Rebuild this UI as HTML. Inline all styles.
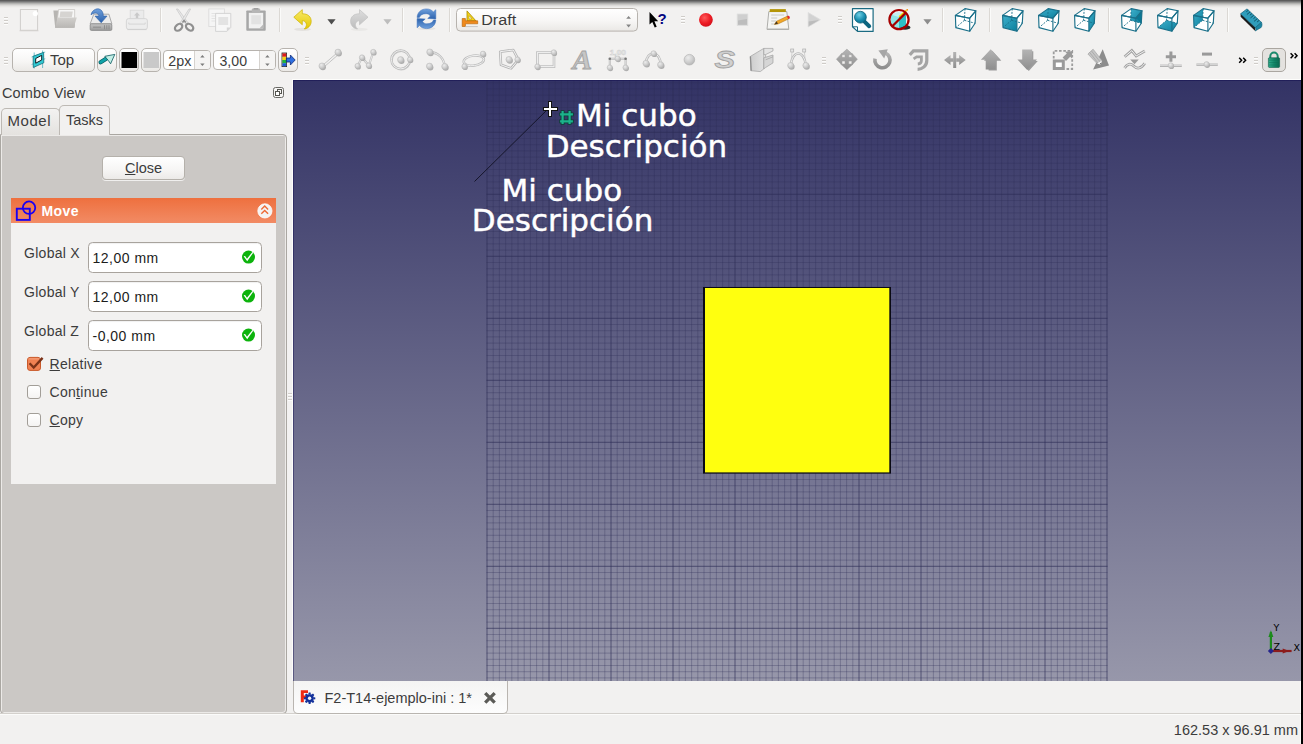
<!DOCTYPE html>
<html lang="en">
<head>
<meta charset="utf-8">
<title>FreeCAD</title>
<style>
html,body{margin:0;padding:0;}
body{width:1303px;height:744px;overflow:hidden;background:#f2f1f0;position:relative;
  font-family:"Liberation Sans","DejaVu Sans",sans-serif;font-size:14.5px;color:#3c3c3c;}
.abs{position:absolute;}
#topshadow{left:0;top:0;width:1301px;height:9px;background:linear-gradient(#5c5c5c 0.5px,#767676 1.5px,#949493 2.5px,#b2b2b0 3.5px,#cac9c7 4.5px,#dcdbd9 5.5px,#e8e7e5 6.5px,#efeeec 7.5px,#f2f1f0 8.5px);}
#rightedge{left:1301px;top:0;width:2px;height:744px;background:#000;}
.handle{position:absolute;width:6px;height:9px;
  background:repeating-linear-gradient(#c9c6c2 0,#c9c6c2 1px,transparent 1px,transparent 3px);}
.vsep{position:absolute;width:1px;height:26px;background:#d6d3cf;box-shadow:1px 0 0 #fbfbfa;}
.btn{position:absolute;box-sizing:border-box;border:1px solid #b5b1ab;border-radius:4px;
  background:linear-gradient(#ffffff,#f6f5f4 60%,#eceae8);box-shadow:0 1px 0 rgba(255,255,255,.7);}
.u{text-decoration:underline;}
/* view */
#view{left:293px;top:80px;width:1008px;height:601px;background:linear-gradient(#333365,#9797aa);overflow:hidden;box-shadow:-1px -1px 0 #fdfdfb;}
#view:after{content:'';position:absolute;left:0;top:0;width:1008px;height:601px;box-sizing:border-box;border-top:1px solid rgba(20,16,80,.55);border-left:1px solid rgba(20,16,80,.45);}
#view svg{position:absolute;left:0;top:0;}
.vt{font-family:"DejaVu Sans",sans-serif;font-size:31px;fill:#fff;text-anchor:middle;stroke:#fff;stroke-width:.45px;}
/* combo */
#combo-title{left:2px;top:84.5px;letter-spacing:.15px;font-size:14.5px;color:#3c3c3c;}
.tab{position:absolute;box-sizing:border-box;border:1px solid #bdb9b4;border-bottom:none;border-radius:5px 5px 0 0;
  text-align:center;color:#3c3c3c;}
#pane{left:0px;top:134px;width:287px;height:580px;box-sizing:border-box;background:#cbc8c5;
  border:1px solid #aaa7a2;border-radius:0 4px 4px 4px;box-shadow:inset 1px 1px 0 #eceae8,inset -1px -1px 0 #eceae8;}
#movehdr{left:11px;top:198px;width:265px;height:25px;background:linear-gradient(#ee703f,#f28b64);}
#movebody{left:11px;top:223px;width:265px;height:261px;background:#f2f1f0;}
.inp{position:absolute;box-sizing:border-box;left:88px;width:174px;height:31px;border:1px solid #a8a39d;border-radius:4.5px;background:#fff;
  box-shadow:inset 0 1px 1px rgba(0,0,0,.06);color:#1c1c1c;line-height:30px;padding-left:3.5px;font-size:14px;letter-spacing:.5px;}
.lbl{position:absolute;left:24px;color:#3c3c3c;font-size:14px;letter-spacing:.28px;}
.cb{position:absolute;left:27px;width:14px;height:14px;box-sizing:border-box;border:1px solid #a29e98;border-radius:3px;background:linear-gradient(#fff,#f4f3f2);}
.cbl{position:absolute;left:49.500px;color:#3c3c3c;font-size:14px;letter-spacing:.3px;}
</style>
</head>
<body>
<div id="topshadow" class="abs"></div>
<div class="abs" style="left:1300px;top:9px;width:1px;height:735px;background:#fcfcfb;"></div>
<div id="rightedge" class="abs"></div>


<!-- ============ TOOLBAR 1 ============ -->
<svg id="tb1" class="abs" style="left:0;top:0" width="1303" height="40" viewBox="0 0 1303 40">
<defs>
  <linearGradient id="gBtn" x1="0" y1="0" x2="0" y2="1"><stop offset="0" stop-color="#ffffff"/><stop offset=".55" stop-color="#f7f6f5"/><stop offset="1" stop-color="#eae8e5"/></linearGradient>
  <linearGradient id="gFold" x1="0" y1="0" x2="0" y2="1"><stop offset="0" stop-color="#d2d0cd"/><stop offset="1" stop-color="#b8b6b3"/></linearGradient>
  <linearGradient id="gDrive" x1="0" y1="0" x2="0" y2="1"><stop offset="0" stop-color="#c4c4c4"/><stop offset="1" stop-color="#9b9b9b"/></linearGradient>
  <linearGradient id="gBlue" x1="0" y1="0" x2="0" y2="1"><stop offset="0" stop-color="#6fa0dc"/><stop offset="1" stop-color="#2c62ad"/></linearGradient>
  <linearGradient id="gYel" x1="0" y1="0" x2="0" y2="1"><stop offset="0" stop-color="#f7ea6a"/><stop offset="1" stop-color="#e6c800"/></linearGradient>
  <linearGradient id="gGry" x1="0" y1="0" x2="0" y2="1"><stop offset="0" stop-color="#dedede"/><stop offset="1" stop-color="#bcbcbc"/></linearGradient>
  <radialGradient id="gRed" cx=".4" cy=".35" r=".7"><stop offset="0" stop-color="#ff5a5a"/><stop offset=".6" stop-color="#ec1c24"/><stop offset="1" stop-color="#d0101a"/></radialGradient>
  <radialGradient id="gMag" cx=".4" cy=".3" r=".75"><stop offset="0" stop-color="#6fd0e6"/><stop offset=".6" stop-color="#1a8fb0"/><stop offset="1" stop-color="#0c6c8a"/></radialGradient>
  <linearGradient id="gTeal" x1="0" y1="0" x2="1" y2="1"><stop offset="0" stop-color="#3fb0cc"/><stop offset="1" stop-color="#0b7f9c"/></linearGradient>
  <g id="hdl"><path d="M0 .5h4M0 3.500h4M0 6.500h4" stroke="#cfccc8" stroke-width="1"/><path d="M0 1.500h4M0 4.500h4M0 7.500h4" stroke="#fdfdfc" stroke-width="1"/></g>
  <g id="sep"><path d="M.5 0v24" stroke="#dbd8d4" stroke-width="1"/><path d="M1.5 0v24" stroke="#fbfbfa" stroke-width="1"/></g>
  <!-- cube wireframe: A(0.4,7.4) B(10.2,0.4) C(21,2.8) D(14.9,10.2) E(14.9,23.3) F(1,19.6) G(20.3,15.3) H(9.6,12.3) -->
  <g id="cubeW" fill="none" stroke="#1b708a" stroke-width="1.150" stroke-linejoin="round">
    <path d="M.6 7.4L10.2 .6L21 2.8L14.9 10.2Z"/><path d="M.6 7.4L14.9 10.2V23.3L1 19.6Z"/><path d="M14.9 10.2L21 2.8L20.3 15.3L14.9 23.3"/>
    <path d="M10.2 .6L9.6 12.3M9.6 12.3L1 19.6M9.6 12.3L20.3 15.3" stroke-width=".9" stroke-dasharray="2 1.3"/>
  </g>
</defs>
<!-- handle -->
<use href="#hdl" x="4" y="17"/>
<!-- new -->
<g>
  <path d="M19.5 30.8h19" stroke="#dddbd8" stroke-width="1.2"/>
  <rect x="20.4" y="9.5" width="17.2" height="20.8" fill="#f3f2f1" stroke="#d0cecb" stroke-width="1"/>
  <circle cx="35.3" cy="13.6" r="2.6" fill="#fff"/>
</g>
<!-- open -->
<g>
  <path d="M53.4 10.6h5.2v-1.2h16.2v18.4H55.2z" fill="#b7b5b2"/>
  <path d="M58.6 9.5h16.1v8.6L57 24.6z" fill="#f7f7f6" stroke="#cfcdca" stroke-width=".8"/>
  <path d="M60.4 11.6h12.4l-1 5.6H59.5z" fill="#d6d4d1"/>
  <path d="M57.8 17.4h19l-3.1 10.4H55z" fill="url(#gFold)"/>
</g>
<!-- save -->
<g>
  <path d="M93.8 14.2h15.1l3 9.8H90.1z" fill="#ececec" stroke="#a3a3a3" stroke-width=".9"/>
  <rect x="90.2" y="23.8" width="21.6" height="6.6" rx="1.2" fill="url(#gDrive)" stroke="#8d8d8d" stroke-width=".9"/>
  <path d="M93 27.2h8M104.5 25.2v4M106.8 25.2v4M109 25.2v4" stroke="#8c8c8c" stroke-width="1"/>
  <path d="M91 14.8C92 9.6 98.3 6.8 101.6 10.6C102.8 12 103.3 13.8 103.3 16.1H107L101.2 22.8L95 16.1H98.9C98.7 13.4 95.3 11.6 91 14.8Z" fill="url(#gBlue)" stroke="#2b5ea5" stroke-width=".6"/>
</g>
<!-- save as (disabled) -->
<g>
  <rect x="130.2" y="10.2" width="13.6" height="10" fill="#ebebeb" stroke="#d9d9d9" stroke-width=".9"/>
  <path d="M137 12.2l3 3.3h-1.8v3h-2.4v-3H134z" fill="#c9c9c9"/>
  <rect x="126.4" y="18.6" width="21" height="10.8" rx="2.2" fill="#ededed" stroke="#d2d2d2" stroke-width=".9"/>
  <path d="M128.8 22.5v1.6h16.4v-1.6" fill="none" stroke="#d5d5d5" stroke-width="1"/>
  <path d="M127.5 29.6h19" stroke="#d0d0d0" stroke-width="1"/>
</g>
<use href="#sep" x="160" y="8"/>
<!-- cut -->
<g>
  <path d="M176.4 9L178 9L188.2 23L186 24.5Z" fill="#e9e9e9" stroke="#c5c5c5" stroke-width=".7"/>
  <path d="M190.6 9L189 9L180 23L182 24.5Z" fill="#e9e9e9" stroke="#c5c5c5" stroke-width=".7"/>
  <ellipse cx="178.6" cy="27.3" rx="4.1" ry="2.9" transform="rotate(-38 178.6 27.3)" fill="none" stroke="#909090" stroke-width="2.2"/>
  <ellipse cx="189.6" cy="27.2" rx="4.1" ry="2.9" transform="rotate(38 189.6 27.2)" fill="none" stroke="#909090" stroke-width="2.2"/>
  <path d="M182.5 22.5L184 20.5L185.8 22.5" fill="none" stroke="#909090" stroke-width="1.6"/>
</g>
<!-- copy -->
<g>
  <rect x="208.8" y="8.9" width="15.6" height="17.6" fill="#f5f5f5" stroke="#dcdcdc" stroke-width=".9"/>
  <path d="M211.5 13.5h5M211.5 16h4M211.5 18.5h4M211.5 21h4" stroke="#e3e3e3" stroke-width="1"/>
  <path d="M215.6 13.4h15.2v14l-4 4h-11.2z" fill="#f7f7f7" stroke="#d0d0d0" stroke-width=".9"/>
  <rect x="218.3" y="17" width="9.8" height="8" fill="#e3e3e3"/>
  <path d="M226.8 31.4v-4h4z" fill="#d6d6d6"/>
</g>
<!-- paste -->
<g>
  <rect x="246.3" y="10.4" width="19.4" height="20.3" rx=".8" fill="#a7a7a7"/>
  <rect x="248.8" y="12.8" width="14.4" height="15.6" fill="#f1f1f1"/>
  <rect x="251.3" y="15.2" width="9.6" height="9" fill="#e2e2e2"/>
  <rect x="251.8" y="8.4" width="8.4" height="4.6" rx="1" fill="#b6b6b6"/>
  <rect x="253.6" y="8" width="4.8" height="1.6" fill="#a0a0a0"/>
  <path d="M259.3 28.4l3.9-3.9v3.9z" fill="#b9b9b9"/>
</g>
<use href="#sep" x="279" y="8"/>
<!-- undo -->
<g>
  <ellipse cx="302.5" cy="29.3" rx="8.5" ry="1.6" fill="#e3e1de"/>
  <path d="M293.8 17.2L302.3 9.6V13.8C308 13.6 311.2 17 311.2 21.2C311.2 25.6 308 28.6 304.3 29C306.4 27 306.9 24.6 306 22.9C305.1 21.2 303.6 20.7 302.3 20.7V24.8Z" fill="url(#gYel)" stroke="#cdb100" stroke-width=".7" stroke-linejoin="round"/>
</g>
<path d="M327.4 19.3h8.2l-4.1 5.1z" fill="#4d4d4d"/>
<!-- redo -->
<g>
  <ellipse cx="359.3" cy="29.3" rx="8.5" ry="1.6" fill="#e9e8e6"/>
  <path d="M368 17.2L359.5 9.6V13.8C353.8 13.6 350.6 17 350.6 21.2C350.6 25.6 353.8 28.6 357.5 29C355.4 27 354.9 24.6 355.8 22.9C356.7 21.2 358.2 20.7 359.5 20.7V24.8Z" fill="url(#gGry)" stroke="#c2c2c2" stroke-width=".7" stroke-linejoin="round"/>
</g>
<path d="M383.4 19.3h8.2l-4.1 5.1z" fill="#bdbdbd"/>
<use href="#sep" x="402" y="8"/>
<!-- refresh -->
<ellipse cx="426.500" cy="28.600" rx="9" ry="1.500" fill="#e6e4e1"/>
<g fill="url(#gBlue)" stroke="#3a6fba" stroke-width=".5" stroke-linejoin="round">
  <path id="rfa" d="M417.100 17.600C417.300 12 421.500 8.900 426.500 8.900C429.500 8.900 431.800 10.100 433.300 11.900L435.800 9.700V18.900L427.700 18.500L430.400 16C429.400 14.600 428 13.700 426.200 13.700C422.600 13.600 420.200 15.200 419.300 17.600Z"/>
  <use href="#rfa" transform="rotate(180 426.450 18.750)"/>
</g>
<use href="#sep" x="449" y="8"/>
<!-- workbench combo -->
<rect x="456.5" y="8.5" width="181" height="22.6" rx="4" fill="url(#gBtn)" stroke="#b7b3ae" stroke-width="1"/>
<g>
  <path d="M467 10.9V20.8H475.9Z" fill="#f3d31a" stroke="#a98b00" stroke-width=".8" stroke-linejoin="round"/>
  <path d="M469 15.6V18.9H472Z" fill="#f6f4ef" stroke="#a98b00" stroke-width=".5"/>
  <path d="M462.2 18.5h3.2v2.3h12.3v3H465.4v2.7h-3.2z" fill="#f08a1d" stroke="#b35f00" stroke-width=".6" stroke-linejoin="round"/>
  <path d="M465.5 26.6h12.3" stroke="#b9b9b9" stroke-width=".8"/>
</g>
<text x="481.2" y="24.7" font-family="Liberation Sans, sans-serif" font-size="15.5" fill="#3c3c3c" textLength="35" lengthAdjust="spacingAndGlyphs">Draft</text>
<path d="M626.2 18.7h4.8l-2.4-2.8zM626.2 24.6h4.8l-2.4 2.8z" fill="#858585"/>
<!-- whats this -->
<path d="M649.5 12.1V24.6L652.3 22L654.7 27.6L656.7 26.7L654.4 21.3H658.2Z" fill="#000"/>
<text x="657.6" y="23.8" font-family="Liberation Sans, sans-serif" font-weight="bold" font-size="15" fill="#050580">?</text>
<use href="#hdl" x="681" y="16"/>
<!-- record / stop / macro / play -->
<circle cx="705.9" cy="19.8" r="6.9" fill="url(#gRed)"/>
<g><rect x="737.2" y="14" width="10.6" height="11.4" fill="#cfcfcf" stroke="#dedede" stroke-width=".8"/><path d="M738 20.5l9-1.5v5.8h-9z" fill="#bdbdbd"/></g>
<g>
  <path d="M768.8 11.6h18l2 17.8h-21.8z" fill="#f5f5f3" stroke="#9c9c98" stroke-width=".8"/>
  <path d="M767.2 29.2h21.4" stroke="#b0b0ac" stroke-width="1.2"/>
  <rect x="769.7" y="9.2" width="16" height="2.8" fill="#c9a80c"/>
  <path d="M771 9v3M773 9v3M775 9v3M777 9v3M779 9v3M781 9v3M783 9v3M785 9v3" stroke="#8f7600" stroke-width=".7"/>
  <path d="M771.2 15h13M771.2 18h6M771.2 21h5M771.2 24h2.5" stroke="#c8c8c4" stroke-width="1"/>
  <path d="M774.3 24.4l2.3-3.2l11.2-5.2l1.4 2.6l-11.2 5.4z" fill="#f2a72a" stroke="#a86a00" stroke-width=".5"/>
  <path d="M774.3 24.4l2.3-3.2l1.4 2.6z" fill="#4a3a22"/>
  <path d="M787 16.4l1.4-.6c.9-.2 1.8 1.6 1.200 2.400l-1.400.800z" fill="#e0262d"/>
</g>
<g><path d="M808.2 12.6L820.4 19.7L808.2 26.9Z" fill="#d2d2d2" stroke="#dddddd" stroke-width=".8"/><path d="M808.6 21.5L819.2 20L808.6 26.3Z" fill="#bcbcbc"/></g>
<use href="#hdl" x="838" y="16"/>
<!-- zoom fit -->
<g>
  <path d="M852.5 8.6h20.600V31.400H857.500L852.500 26.800Z" fill="#fff" stroke="#1b6b82" stroke-width="1.2" stroke-linejoin="round"/>
  <path d="M852.7 26.800h4.800v4.500" fill="none" stroke="#1b6b82" stroke-width="1"/>
  <path d="M864.500 21.600L869.200 26.200" stroke="#0e6680" stroke-width="4" stroke-linecap="round"/>
  <circle cx="860.4" cy="17.2" r="5.9" fill="url(#gMag)" stroke="#0d6078" stroke-width=".8"/>
</g>
<!-- draw style -->
<g>
  <ellipse cx="905" cy="27.4" rx="5.4" ry="2.4" fill="#2a2a2a"/>
  <path d="M891 14.600L898.300 12L906 14.200L899 17Z" fill="#c3f3f3"/>
  <path d="M891 14.600L899 17V28.600L891 25.200Z" fill="#8ee6e6"/>
  <path d="M899 17L906 14.200V25.600L899 28.600Z" fill="#2ec0c8"/>
  <path d="M899.200 17L906.400 10.400" stroke="#f0d400" stroke-width="1.7"/>
  <circle cx="907.2" cy="9.800" r=".9" fill="#f28c00"/>
  <circle cx="899" cy="19.600" r="9.600" fill="none" stroke="#a60000" stroke-width="2.200"/>
  <path d="M892.300 26.300L905.700 12.900" stroke="#a60000" stroke-width="2.200"/>
</g>
<path d="M923.4 19.300h8.200l-4.100 5.100z" fill="#8c8c8c"/>
<use href="#sep" x="942" y="8"/>
<!-- view cubes -->
<g transform="translate(954.8 8)"><path d="M.6 7.400L10.200 .600L21 2.800L20.300 15.300L14.900 23.300L1 19.600Z" fill="#fff"/><use href="#cubeW"/></g>
<use href="#sep" x="989" y="8"/>
<g transform="translate(1002 8)"><path d="M.6 7.400L10.200 .600L21 2.800L20.300 15.300L14.900 23.300L1 19.600Z" fill="#fff"/><path d="M.6 7.400L14.900 10.200V23.300L1 19.600Z" fill="url(#gTeal)"/><use href="#cubeW"/></g>
<g transform="translate(1038 8)"><path d="M.6 7.400L10.200 .600L21 2.800L20.300 15.300L14.900 23.300L1 19.600Z" fill="#fff"/><path d="M.6 7.400L10.200 .600L21 2.800L14.900 10.200Z" fill="url(#gTeal)"/><use href="#cubeW"/></g>
<g transform="translate(1074 8)"><path d="M.6 7.400L10.200 .600L21 2.800L20.300 15.300L14.900 23.300L1 19.600Z" fill="#fff"/><path d="M14.900 10.200L21 2.800L20.300 15.300L14.900 23.300Z" fill="url(#gTeal)"/><use href="#cubeW"/></g>
<use href="#sep" x="1108" y="8"/>
<g transform="translate(1121 8)"><path d="M.6 7.400L10.200 .600L21 2.800L20.300 15.300L14.900 23.300L1 19.600Z" fill="#fff"/><path d="M10.200 .600L21 2.800L20.300 15.300L9.600 12.300Z" fill="url(#gTeal)"/><path d="M14.900 10.200L21 2.800L20.300 15.300Z" fill="#0a7894"/><use href="#cubeW"/></g>
<g transform="translate(1157 8)"><path d="M.6 7.400L10.200 .600L21 2.800L20.300 15.300L14.900 23.300L1 19.600Z" fill="#fff"/><path d="M1 19.600L9.600 12.300L20.300 15.300L14.900 23.300Z" fill="url(#gTeal)"/><use href="#cubeW"/></g>
<g transform="translate(1193 8)"><path d="M.6 7.400L10.200 .600L21 2.800L20.300 15.300L14.900 23.300L1 19.600Z" fill="#fff"/><path d="M.6 7.400L10.200 .600L9.600 12.300L1 19.600Z" fill="url(#gTeal)"/><use href="#cubeW"/></g>
<use href="#sep" x="1227" y="8"/>
<!-- ruler -->
<g>
  <path d="M1240.600 16.800L1240.600 13.800L1255.400 27.600L1255.200 31Z" fill="#1c1c1c"/>
  <path d="M1240.600 13.800L1247 8.900L1261.500 22.400L1255.400 27.600Z" fill="#2f9dbb" stroke="#0c5f78" stroke-width=".7" stroke-linejoin="round"/>
  <path d="M1255.400 27.600L1261.500 22.400C1262.300 24 1262.100 26 1261.200 27.400L1255.200 31C1256 30 1256.200 28.800 1255.400 27.600Z" fill="#1b86a4" stroke="#0c5f78" stroke-width=".6"/>
  <path d="M1248.300 10.200l-2 1.600M1250.100 11.900l-3.200 2.600M1251.900 13.600l-2 1.600M1253.700 15.300l-3.200 2.600M1255.500 17l-2 1.600M1257.300 18.700l-3.200 2.600M1259.100 20.400l-2 1.600" stroke="#083f52" stroke-width=".8"/>
</g>
</svg>


<!-- ============ TOOLBAR 2 ============ -->
<svg id="tb2" class="abs" style="left:0;top:40px" width="1303" height="40" viewBox="0 40 1303 40">
<defs>
  <radialGradient id="gNode" cx=".38" cy=".32" r=".75"><stop offset="0" stop-color="#ececec"/><stop offset=".55" stop-color="#cfcfcf"/><stop offset="1" stop-color="#b2b2b2"/></radialGradient>
  <linearGradient id="gDk" x1="0" y1="0" x2="0" y2="1"><stop offset="0" stop-color="#b4b4b4"/><stop offset="1" stop-color="#8e8e8e"/></linearGradient>
  <linearGradient id="gFace" x1="0" y1="0" x2="1" y2="0"><stop offset="0" stop-color="#cdcdcd"/><stop offset="1" stop-color="#e2e2e2"/></linearGradient>
  <linearGradient id="gLock" x1="0" y1="0" x2="1" y2="0"><stop offset="0" stop-color="#35b090"/><stop offset=".5" stop-color="#14896a"/><stop offset="1" stop-color="#0b6a50"/></linearGradient>
  <g id="nd"><circle cx=".9" cy="1.300" r="3" fill="#adadad"/><circle cx="0" cy="0" r="3.1" fill="url(#gNode)" stroke="#b9b9b9" stroke-width=".5"/></g>
  <g id="nds"><circle cx=".7" cy="1" r="2.600" fill="#adadad"/><circle cx="0" cy="0" r="2.7" fill="url(#gNode)" stroke="#b9b9b9" stroke-width=".5"/></g>
</defs>
<use href="#hdl" x="4" y="57"/>
<!-- Top button -->
<rect x="12.5" y="48.5" width="82" height="23" rx="4.500" fill="url(#gBtn)" stroke="#b7b3ae"/>
<g>
  <path d="M31.600 57l13.600-5M31.600 64.500l13.600-5.800M34.200 52.500v16M42.600 50.500v17.500" stroke="#3aa9b8" stroke-width=".7"/>
  <path d="M33.100 56.300L43.600 52.400L43.800 62.800L33.300 67.500Z" fill="#30c8d2" stroke="#15707c" stroke-width=".8" stroke-linejoin="round"/>
  <path d="M35.700 58.500L41.700 55.300V60L35.700 63.200Z" fill="#fff" stroke="#0c1a1e" stroke-width="1" stroke-linejoin="round"/>
</g>
<text x="50" y="64.700" font-family="Liberation Sans, sans-serif" font-size="14" fill="#3c3c3c" textLength="24.200" lengthAdjust="spacingAndGlyphs">Top</text>
<!-- small buttons -->
<rect x="97.5" y="48.500" width="19" height="23" rx="4.500" fill="url(#gBtn)" stroke="#b7b3ae"/>
<g>
  <path d="M100.600 62.300L106.500 58.500" stroke="#07595e" stroke-width="4.200" stroke-linecap="round"/><path d="M100.600 62.300L106.500 58.500" stroke="#12a3a8" stroke-width="2.800" stroke-linecap="round"/>
  <path d="M104.800 56.300L114.800 54.400L110.600 63.800L108.400 60.600Z" fill="#c4efe6" stroke="#07595e" stroke-width=".8" stroke-linejoin="round"/>
</g>
<rect x="119.500" y="48.500" width="19" height="23" rx="4.500" fill="url(#gBtn)" stroke="#b7b3ae"/>
<rect x="121.500" y="52" width="15.600" height="16" fill="#000"/>
<rect x="141.500" y="48.500" width="19" height="23" rx="4.500" fill="url(#gBtn)" stroke="#b7b3ae"/>
<rect x="143.500" y="52" width="15.600" height="16" fill="#c9c9c9"/>
<!-- spin boxes -->
<rect x="163.500" y="50.500" width="47" height="19" rx="3.500" fill="#fff" stroke="#b7b3ae"/>
<path d="M194.500 51v18" stroke="#d6d3cf"/><path d="M195 51h12a3 3 0 0 1 3 3v12a3 3 0 0 1-3 3h-12z" fill="#f5f4f3"/>
<text x="168.300" y="65.600" font-family="Liberation Sans, sans-serif" font-size="15" fill="#3c3c3c" textLength="23" lengthAdjust="spacingAndGlyphs">2px</text>
<path d="M200.200 57.600h4.400l-2.200-2.600zM200.200 63.400h4.400l-2.200 2.600z" fill="#7c7c7c"/>
<rect x="213.500" y="50.500" width="62" height="19" rx="3.500" fill="#fff" stroke="#b7b3ae"/>
<path d="M259.500 51v18" stroke="#d6d3cf"/><path d="M260 51h12a3 3 0 0 1 3 3v12a3 3 0 0 1-3 3h-12z" fill="#f5f4f3"/>
<text x="219.500" y="65.600" font-family="Liberation Sans, sans-serif" font-size="15" fill="#3c3c3c" textLength="27.500" lengthAdjust="spacingAndGlyphs">3,00</text>
<path d="M265.200 57.600h4.400l-2.200-2.600zM265.200 63.400h4.400l-2.200 2.600z" fill="#7c7c7c"/>
<rect x="278.500" y="48.500" width="19" height="23" rx="4.500" fill="url(#gBtn)" stroke="#b7b3ae"/>
<g>
  <rect x="282" y="53" width="4.600" height="13.600" fill="#d8d8d8" stroke="#222" stroke-width=".8"/>
  <rect x="282.400" y="53.400" width="3.800" height="3.400" fill="#e01b1b"/><rect x="282.400" y="56.800" width="3.800" height="3.200" fill="#f2d21b"/><rect x="282.400" y="60" width="3.800" height="3.200" fill="#1fb53a"/><rect x="282.400" y="63.200" width="3.800" height="3" fill="#1b5fd8"/>
  <path d="M286.400 58h4v-3l4.800 5l-4.800 5v-3h-4z" fill="#2f6fe0" stroke="#0b2a78" stroke-width=".8" stroke-linejoin="round"/>
</g>
<use href="#hdl" x="305" y="57"/>
<!-- line -->
<g><path d="M322.600 65.400L337.400 52.600M324 67L338.800 54.200" stroke="#c4c4c4" stroke-width="1"/><path d="M323.300 66.200L338.100 53.400" stroke="#efefef" stroke-width="1"/><use href="#nd" x="322" y="66"/><use href="#nd" x="338" y="52.200"/></g>
<!-- wire -->
<g><path d="M357.600 66L362 57.500L368.800 65.500L373.300 52" fill="none" stroke="#c2c2c2" stroke-width="2.200"/><path d="M357.600 66L362 57.500L368.800 65.500L373.300 52" fill="none" stroke="#efefef" stroke-width=".8"/><use href="#nds" x="357.600" y="66"/><use href="#nds" x="362" y="57.500"/><use href="#nds" x="368.800" y="65.500"/><use href="#nds" x="373.300" y="52"/></g>
<!-- circle -->
<g><circle cx="401.300" cy="60.600" r="9.200" fill="none" stroke="#c9c9c9" stroke-width="1.200"/><circle cx="400.600" cy="59.700" r="9.200" fill="none" stroke="#bcbcbc" stroke-width="2.400"/><circle cx="400.600" cy="59.700" r="9.200" fill="none" stroke="#f2f2f2" stroke-width=".9"/><use href="#nd" x="400.600" y="59.700"/><use href="#nds" x="410" y="59.500"/></g>
<!-- arc -->
<g><path d="M430 52C438 52.500 444 58 444.800 66.500" fill="none" stroke="#bdbdbd" stroke-width="2.400"/><path d="M430 52C438 52.500 444 58 444.800 66.500" fill="none" stroke="#f2f2f2" stroke-width=".9"/><use href="#nd" x="429.800" y="52"/><use href="#nd" x="444.800" y="66.500"/><use href="#nd" x="429.500" y="66.200"/></g>
<!-- ellipse -->
<g><ellipse cx="473.800" cy="60.600" rx="10.200" ry="5" fill="none" stroke="#bdbdbd" stroke-width="2.400" transform="rotate(-8 473.800 60.600)"/><ellipse cx="473.800" cy="60.600" rx="10.200" ry="5" fill="none" stroke="#f2f2f2" stroke-width=".9" transform="rotate(-8 473.800 60.600)"/><use href="#nds" x="483" y="53.800"/><use href="#nds" x="464.500" y="66.500"/></g>
<!-- polygon -->
<g><path d="M500.200 51.700L513.300 50L518.400 59.700L511.100 68.400L501 64.800Z" fill="none" stroke="#b5b5b5" stroke-width="2.600" stroke-linejoin="round"/><path d="M500.200 51.700L513.300 50L518.400 59.700L511.100 68.400L501 64.800Z" fill="none" stroke="#f2f2f2" stroke-width="1"/><use href="#nd" x="509" y="59.500"/><use href="#nds" x="517.500" y="59.600"/></g>
<!-- rectangle -->
<g><rect x="537.400" y="52.600" width="16.600" height="14" fill="none" stroke="#bdbdbd" stroke-width="2.600"/><rect x="537.400" y="52.600" width="16.600" height="14" fill="none" stroke="#f2f2f2" stroke-width="1"/><use href="#nds" x="553.800" y="52.400"/><use href="#nds" x="537.400" y="66.600"/></g>
<!-- text A -->
<text x="572.600" y="69" font-family="Liberation Serif, serif" font-style="italic" font-weight="bold" font-size="27.500" fill="#c6c6c6" stroke="#a4a4a4" stroke-width=".9" textLength="19.500" lengthAdjust="spacingAndGlyphs">A</text>
<!-- dimension -->
<g><text x="609.800" y="55" font-family="Liberation Sans, sans-serif" font-size="6.500" font-weight="bold" fill="#fff" stroke="#cfcfcf" stroke-width=".5" textLength="16" lengthAdjust="spacingAndGlyphs">1,00</text>
<path d="M609.800 58.700h15.800M609.800 58.700v9M625.600 58.700v9" fill="none" stroke="#b4b4b4" stroke-width="2"/><path d="M609.800 58.700h15.800M609.800 58.700v9M625.600 58.700v9" fill="none" stroke="#ededed" stroke-width=".7"/>
<circle cx="609.800" cy="58.700" r="1.300" fill="#777"/><circle cx="625.600" cy="58.700" r="1.300" fill="#777"/>
<use href="#nds" x="617.600" y="58.600"/><use href="#nds" x="609.800" y="67.600"/><use href="#nds" x="625.600" y="67.600"/></g>
<!-- arc 3pt -->
<g><path d="M646 63.300C646.500 50 660.500 50 660.600 64.800" fill="none" stroke="#bdbdbd" stroke-width="2.600"/><path d="M646 63.300C646.500 50 660.500 50 660.600 64.800" fill="none" stroke="#f2f2f2" stroke-width="1"/><use href="#nd" x="646" y="63.300"/><use href="#nd" x="660.600" y="64.800"/><use href="#nds" x="653.600" y="53.400"/></g>
<!-- point -->
<circle cx="689.400" cy="59.700" r="5.300" fill="url(#gNode)" stroke="#b4b4b4" stroke-width=".7"/>
<!-- shapestring S -->
<text x="714.500" y="68.300" font-family="Liberation Sans, sans-serif" font-style="italic" font-weight="bold" font-size="24" fill="#d0d0d0" stroke="#a0a0a0" stroke-width=".8" textLength="20.500" lengthAdjust="spacingAndGlyphs">S</text>
<!-- facebinder -->
<g stroke="#a0a0a0" stroke-width=".7" stroke-linejoin="round">
  <path d="M750.400 56.400L763.800 48.400V68.900L760.300 71.600L750.900 70.700Z" fill="url(#gFace)"/>
  <path d="M763.800 48.400H773V50.900L765.600 54.600H763.800Z" fill="#e4e4e4"/>
  <path d="M763.800 57.800L773 55V62.900L765.600 67.500L763.800 68.900Z" fill="#d6d6d6"/>
  <path d="M765.600 54.600V57.200M765.600 59.800L773 56.800" fill="none"/>
  <path d="M750.400 56.400L751.200 70.700" fill="none" stroke="#8e8e8e" stroke-width="1.300"/>
</g>
<!-- bezier -->
<g><path d="M792.200 50.500L790.700 65.500M804.200 50.500L805.900 65.500" stroke="#c9c9c9" stroke-width=".8"/><path d="M790.700 65.500C792.500 49.500 804 49.500 805.900 65.500" fill="none" stroke="#b9b9b9" stroke-width="2.400"/><path d="M790.700 65.500C792.500 49.500 804 49.500 805.900 65.500" fill="none" stroke="#f2f2f2" stroke-width=".9"/>
<rect x="790.700" y="49" width="3" height="3" fill="#e6e6e6" stroke="#b0b0b0" stroke-width=".7"/><rect x="802.700" y="49" width="3" height="3" fill="#e6e6e6" stroke="#b0b0b0" stroke-width=".7"/><use href="#nd" x="790.700" y="65.500"/><use href="#nd" x="805.900" y="65.500"/></g>
<use href="#hdl" x="822" y="57"/>
<!-- move -->
<path d="M846.900 49.100L853.100 54.800H848.800V57.300H851.800V53.200L857.400 59.200L851.800 65.200V61.100H848.800V64H853.100L846.900 69.800L840.700 64H845V61.100H842V65.200L836.400 59.200L842 53.200V57.300H845V54.800H840.700Z" fill="url(#gDk)" stroke="#a0a0a0" stroke-width=".5"/>
<!-- rotate -->
<g><path d="M875 58.600A7.600 7.600 0 1 0 885.600 53.200" fill="none" stroke="url(#gDk)" stroke-width="3.600"/><path d="M878.400 50.500L887.800 49.200L884.200 58.400Z" fill="#a6a6a6"/></g>
<!-- offset -->
<g fill="none" stroke="#a4a4a4"><path d="M909.800 54.800L913.400 50.900H926.800V60.500C926.800 66 922.500 69.200 917.600 69.300" stroke-width="3.200"/><path d="M913.600 58.800L916.600 56.800H921.400V60.500C921.400 62.600 920 63.800 917.800 64" stroke-width="2.800"/></g>
<!-- trimex -->
<g fill="url(#gDk)"><rect x="953.200" y="52" width="3" height="16"/><path d="M944 60l6.500-5v3.200h3v3.600h-3V65zM965.700 60l-6.500-5v3.200h-3v3.600h3V65z"/></g>
<!-- upgrade -->
<g><path d="M992.300 50.800l9 10h-4.500v9.800h-8.200v-9.800H984z" fill="#9c9c9c"/><path d="M990.700 49.200l9.800 10.600h-4.800v9.800h-10v-9.800h-4.800z" fill="url(#gDk)"/></g>
<!-- downgrade -->
<g><path d="M1028.800 71l9-10h-4.500v-9.800h-8.200V61H1020z" fill="#9c9c9c"/><path d="M1027.200 70l9.800-10.600h-4.800v-9.800h-10v9.800h-4.800z" fill="url(#gDk)"/></g>
<!-- scale -->
<g><path d="M1053.700 58.500V50.900H1072.200V69H1065.500" fill="none" stroke="#9d9d9d" stroke-width="1.800" stroke-dasharray="2.600 1.700"/><rect x="1054.300" y="61" width="9" height="7.500" fill="#fff" stroke="#9a9a9a" stroke-width="3"/><path d="M1062.600 57.600l4.200-4.200l-1.700-1.700l7.200-.400l-.400 7.200l-1.700-1.700l-4.200 4.200z" fill="#9a9a9a"/></g>
<!-- edit -->
<g><path d="M1102.700 49.200L1109 65.500L1093.100 69.500Z" fill="#8c8c8c"/><path d="M1087.900 54L1093.100 49.200L1101.900 60.400L1100.600 63.600L1097.100 63.600Z" fill="#c6c6c6" stroke="#9a9a9a" stroke-width=".6"/><path d="M1089.600 52.400l8.800 11.200M1091.400 50.800l8.800 11.200" stroke="#9a9a9a" stroke-width=".6"/><path d="M1097.100 63.600l4.800-3.200l-1 4.400z" fill="#f4f4f4"/><path d="M1099.900 63.600l1.400-.8l-.4 2z" fill="#555"/></g>
<!-- wire to bspline -->
<g fill="none"><path d="M1124.600 56.800L1131.800 50.600L1136.200 56L1144.800 51" stroke="#a2a2a2" stroke-width="2.800"/><path d="M1124.600 56.800L1131.800 50.600L1136.200 56L1144.800 51" stroke="#f2f2f2" stroke-width="1"/><path d="M1130.200 59.400h8.600l-4.300 4.800z" fill="#9c9c9c"/><path d="M1124.600 67.900C1127 64 1130.500 63 1133.400 65.800C1137 69.300 1141 69 1144.800 63.200" stroke="#a2a2a2" stroke-width="2.800"/><path d="M1124.600 67.900C1127 64 1130.500 63 1133.400 65.800C1137 69.300 1141 69 1144.800 63.200" stroke="#f2f2f2" stroke-width="1"/></g>
<!-- add point -->
<g><path d="M1160 65.800h21.800" stroke="#b4b4b4" stroke-width="2.400"/><path d="M1160 65.500h21.800" stroke="#e6e6e6" stroke-width=".7"/><path d="M1165.800 55.200h3.600v-3.600h3v3.600h3.600v3h-3.600v3.600h-3v-3.600h-3.600z" fill="#9a9a9a"/><use href="#nds" x="1170.800" y="65.400"/></g>
<!-- del point -->
<g><path d="M1196.400 64.700h21.400" stroke="#b4b4b4" stroke-width="2.400"/><path d="M1196.400 64.400h21.400" stroke="#e6e6e6" stroke-width=".7"/><rect x="1202" y="52.600" width="10" height="3" fill="#9a9a9a"/><use href="#nds" x="1206.600" y="64.300"/></g>
<!-- extension chevrons -->
<path d="M1239.200 57.800l2.400 2.500l-2.400 2.500M1243.200 57.800l2.400 2.500l-2.400 2.500" fill="none" stroke="#000" stroke-width="1.500"/>
<use href="#hdl" x="1254" y="57"/>
<!-- lock button -->
<rect x="1262.500" y="48.500" width="23" height="23" rx="4.500" fill="#e4e2df" stroke="#aaa6a0"/>
<g><path d="M1270.300 58.500v-2.300a3.700 3.700 0 0 1 7.400 0v2.300" fill="none" stroke="#1a8a6c" stroke-width="2"/><rect x="1268.400" y="57.800" width="11.200" height="9.600" rx=".8" fill="url(#gLock)" stroke="#075a44" stroke-width=".6"/><path d="M1269 60.200h10M1269 62.600h10M1269 65h10" stroke="#0a6e54" stroke-width=".5"/></g>
<path d="M1290.600 53.200l2.400 2.500l-2.400 2.500M1294.600 53.200l2.400 2.500l-2.400 2.500" fill="none" stroke="#000" stroke-width="1.500"/>
</svg>

<!-- ============ 3D VIEW ============ -->
<div id="view" class="abs">
<svg width="1008" height="601" viewBox="0 0 1008 601">
  <path d="M200.2 0V601M206.4 0V601M212.6 0V601M218.8 0V601M225.0 0V601M231.2 0V601M237.4 0V601M243.6 0V601M249.8 0V601M262.2 0V601M268.4 0V601M274.6 0V601M280.8 0V601M287.0 0V601M293.2 0V601M299.4 0V601M305.6 0V601M311.8 0V601M324.2 0V601M330.4 0V601M336.6 0V601M342.8 0V601M349.0 0V601M355.2 0V601M361.4 0V601M367.6 0V601M373.8 0V601M386.2 0V601M392.4 0V601M398.6 0V601M404.8 0V601M411.0 0V601M417.2 0V601M423.4 0V601M429.6 0V601M435.8 0V601M448.2 0V601M454.4 0V601M460.6 0V601M466.8 0V601M473.0 0V601M479.2 0V601M485.4 0V601M491.6 0V601M497.8 0V601M510.2 0V601M516.4 0V601M522.6 0V601M528.8 0V601M535.0 0V601M541.2 0V601M547.4 0V601M553.6 0V601M559.8 0V601M572.2 0V601M578.4 0V601M584.6 0V601M590.8 0V601M597.0 0V601M603.2 0V601M609.4 0V601M615.6 0V601M621.8 0V601M634.2 0V601M640.4 0V601M646.6 0V601M652.8 0V601M659.0 0V601M665.2 0V601M671.4 0V601M677.6 0V601M683.8 0V601M696.2 0V601M702.4 0V601M708.6 0V601M714.8 0V601M721.0 0V601M727.2 0V601M733.4 0V601M739.6 0V601M745.8 0V601M758.2 0V601M764.4 0V601M770.6 0V601M776.8 0V601M783.0 0V601M789.2 0V601M795.4 0V601M801.6 0V601M807.8 0V601M193.5 2.7H814.5M193.5 8.9H814.5M193.5 15.1H814.5M193.5 21.3H814.5M193.5 27.5H814.5M193.5 33.7H814.5M193.5 39.9H814.5M193.5 46.1H814.5M193.5 58.5H814.5M193.5 64.7H814.5M193.5 70.9H814.5M193.5 77.1H814.5M193.5 83.3H814.5M193.5 89.5H814.5M193.5 95.7H814.5M193.5 101.9H814.5M193.5 108.1H814.5M193.5 120.5H814.5M193.5 126.7H814.5M193.5 132.9H814.5M193.5 139.1H814.5M193.5 145.3H814.5M193.5 151.5H814.5M193.5 157.7H814.5M193.5 163.9H814.5M193.5 170.1H814.5M193.5 182.5H814.5M193.5 188.7H814.5M193.5 194.9H814.5M193.5 201.1H814.5M193.5 207.3H814.5M193.5 213.5H814.5M193.5 219.7H814.5M193.5 225.9H814.5M193.5 232.1H814.5M193.5 244.5H814.5M193.5 250.7H814.5M193.5 256.9H814.5M193.5 263.1H814.5M193.5 269.3H814.5M193.5 275.5H814.5M193.5 281.7H814.5M193.5 287.9H814.5M193.5 294.1H814.5M193.5 306.5H814.5M193.5 312.7H814.5M193.5 318.9H814.5M193.5 325.1H814.5M193.5 331.3H814.5M193.5 337.5H814.5M193.5 343.7H814.5M193.5 349.9H814.5M193.5 356.1H814.5M193.5 368.5H814.5M193.5 374.7H814.5M193.5 380.9H814.5M193.5 387.1H814.5M193.5 393.3H814.5M193.5 399.5H814.5M193.5 405.7H814.5M193.5 411.9H814.5M193.5 418.1H814.5M193.5 430.5H814.5M193.5 436.7H814.5M193.5 442.9H814.5M193.5 449.1H814.5M193.5 455.3H814.5M193.5 461.5H814.5M193.5 467.7H814.5M193.5 473.9H814.5M193.5 480.1H814.5M193.5 492.5H814.5M193.5 498.7H814.5M193.5 504.9H814.5M193.5 511.1H814.5M193.5 517.3H814.5M193.5 523.5H814.5M193.5 529.7H814.5M193.5 535.9H814.5M193.5 542.1H814.5M193.5 554.5H814.5M193.5 560.7H814.5M193.5 566.9H814.5M193.5 573.1H814.5M193.5 579.3H814.5M193.5 585.5H814.5M193.5 591.7H814.5M193.5 597.9H814.5" stroke="#2c2c55" stroke-opacity=".29" stroke-width="1" fill="none"/>
  <path d="M194.0 0V601M256.0 0V601M318.0 0V601M380.0 0V601M442.0 0V601M504.0 0V601M566.0 0V601M628.0 0V601M690.0 0V601M752.0 0V601M814.0 0V601M193.5 52.3H814.5M193.5 114.3H814.5M193.5 176.3H814.5M193.5 238.3H814.5M193.5 300.3H814.5M193.5 362.3H814.5M193.5 424.3H814.5M193.5 486.3H814.5M193.5 548.3H814.5" stroke="#2c2c55" stroke-opacity=".64" stroke-width="1" fill="none"/>
  <rect x="410" y="207" width="188" height="186.6" fill="#0a0a14"/>
  <rect x="412" y="208" width="184.3" height="184.4" fill="#ffff0f"/>
  <line x1="181.5" y1="101.5" x2="256" y2="28" stroke="#15152a" stroke-width="1"/>
  <text class="vt" x="343.400" y="46.200">Mi cubo</text>
  <text class="vt" x="343.400" y="77.100">Descripción</text>
  <text class="vt" x="268.900" y="120.600">Mi cubo</text>
  <text class="vt" x="269.6" y="151.4">Descripción</text>
  <!-- axis cross -->
  <g>
    <path d="M977.9 571V552" stroke="#1c8a1c" stroke-width="2.2"/><path d="M977.9 550.200l2.500 6.800h-5z" fill="#1c8a1c"/>
    <path d="M978 571H998.600" stroke="#8c1c1c" stroke-width="2.200"/><path d="M996.200 571l-6.500 -2.400v4.800z" fill="#8c1c1c"/>
    <path d="M977.900 568l3 3l-3 3l-3 -3z" fill="#24248c"/>
    <text x="980.600" y="550.800" font-family="DejaVu Sans, sans-serif" font-size="9.500" fill="#000">Y</text>
    <text x="980.600" y="570.400" font-family="DejaVu Sans, sans-serif" font-size="9.500" fill="#000">Z</text>
    <text x="1000.600" y="570.600" font-family="DejaVu Sans, sans-serif" font-size="9.500" fill="#000">X</text>
  </g>
  <!-- cursor -->
  <g>
    <path d="M250 27h5v-6h4v6h6v4h-6v6h-4v-6h-5z" fill="#111"/>
    <path d="M251 28h5v-6h2v6h6v2h-6v6h-2v-6h-5z" fill="#fff"/>
  </g>
  <g stroke-linecap="butt" fill="none">
    <path d="M269.6 30.300v14.400M276.600 30.300v14.400M266.300 34.300h14.400M266.300 41.300h14.400" stroke="#0b4034" stroke-width="3.800"/>
    <path d="M269.600 31.100v12.800M276.600 31.100v12.800M267.100 34.300h12.800M267.100 41.300h12.800" stroke="#1cb28c" stroke-width="2.200"/>
  </g>
</svg>
</div>

<!-- ============ COMBO VIEW ============ -->
<div id="combo-title" class="abs">Combo View</div>
<svg class="abs" style="left:273px;top:87px" width="11" height="11" viewBox="0 0 11 11"><rect x=".5" y=".5" width="10" height="10" rx="2" fill="#f6f5f4" stroke="#6a6a66"/><rect x="4.500" y="2.500" width="4" height="4" fill="none" stroke="#55554f"/><rect x="2.500" y="4.500" width="4" height="4" fill="#fff" stroke="#55554f"/></svg>
<div id="pane" class="abs"></div>
<div class="tab" style="left:1px;top:108px;width:59px;height:27px;line-height:25px;background:linear-gradient(#f3f2f1,#e4e2df);text-align:left;padding-left:5.5px;font-size:15px;letter-spacing:.55px;line-height:23px;">Model</div>
<div class="tab" style="left:59px;top:105px;width:51px;height:30px;line-height:29px;background:#f2f1f0;">Tasks</div>
<div class="btn" style="left:102px;top:156px;width:83px;height:24px;text-align:center;line-height:22px;"><span class="u">C</span>lose</div>
<div id="movehdr" class="abs"></div>
<div id="movebody" class="abs"></div>
<svg class="abs" style="left:11px;top:198px" width="265" height="25" viewBox="11 198 265 25">
  <rect x="16.800" y="208.700" width="13" height="11.200" fill="none" stroke="#1a00f2" stroke-width="1.900"/>
  <circle cx="29.050" cy="207.650" r="6.200" fill="none" stroke="#1a00f2" stroke-width="1.800"/>
  <circle cx="264.900" cy="210.900" r="7.100" fill="#f4f3f2" stroke="#fff" stroke-width=".8"/>
  <path d="M261.300 209.400L264.700 206.100L268.100 209.400M261.300 213.800L264.700 210.500L268.100 213.800" fill="none" stroke="#ee6a35" stroke-width="1.400"/>
</svg>
<div class="abs" style="left:41.500px;top:202.500px;color:#fff;font-weight:bold;font-size:14px;letter-spacing:.45px;">Move</div>

<div class="lbl" style="top:244.500px;">Global X</div>
<div class="inp" style="top:242px;">12,00 mm</div>
<div class="lbl" style="top:283.500px;">Global Y</div>
<div class="inp" style="top:281px;">12,00 mm</div>
<div class="lbl" style="top:322.500px;">Global Z</div>
<div class="inp" style="top:320px;">-0,00 mm</div>
<svg class="abs" style="left:240px;top:242px" width="20" height="110" viewBox="240 242 20 110">
  <defs><g id="okc"><circle cx="0" cy="0" r="6.500" fill="#0cb30c"/><path d="M-4.900 -.800L-3.400 -1.200L-1.500 1.600L3.900 -5.200L4.900 -4.600L-1.300 4.200Z" fill="#fff"/></g></defs>
  <use href="#okc" x="248.500" y="257.100"/><use href="#okc" x="248.500" y="296.100"/><use href="#okc" x="248.500" y="335.100"/>
</svg>

<svg class="abs" style="left:25px;top:354px" width="20" height="20" viewBox="25 354 20 20">
  <rect x="27.500" y="357.400" width="13" height="13" rx="2.500" fill="#f08152" stroke="#c9592a"/>
  <path d="M28.500 358.900h11" stroke="#f6a583" stroke-width="1"/>
  <path d="M29.600 363.300L33.700 367.500L42.600 357.900" fill="none" stroke="#7a3218" stroke-width="2.300"/>
</svg>
<div class="cbl" style="top:355.500px;"><span class="u">R</span>elative</div>
<div class="cb" style="top:385px;"></div><div class="cbl" style="top:383.500px;">Con<span class="u">t</span>inue</div>
<div class="cb" style="top:413px;"></div><div class="cbl" style="top:411.500px;"><span class="u">C</span>opy</div>

<svg class="abs" style="left:288px;top:393px" width="5" height="9" viewBox="0 0 5 9"><path d="M0 .5h4M0 3.500h4M0 6.500h4" stroke="#d0cdc9"/><path d="M0 1.500h4M0 4.500h4M0 7.500h4" stroke="#fcfcfb"/></svg>
<!-- ============ BOTTOM ============ -->
<div class="abs" style="left:0;top:713px;width:1301px;height:1px;background:#d3d0cc;"></div>
<div class="abs" style="left:0;top:714px;width:1301px;height:1px;background:#fbfbfa;"></div>
<div class="abs" style="left:293px;top:681px;width:215px;height:33px;box-sizing:border-box;border:1px solid #b9b5b0;border-top:none;border-radius:0 0 5px 5px;background:linear-gradient(#f4f4f3,#fdfdfd);"></div>
<svg class="abs" style="left:298px;top:686px" width="205" height="22" viewBox="298 686 205 22">
  <path d="M300.800 690.300h7.200v2.800h-4.200v2.400h3.400v2.700h-3.400v4.100h-3z" fill="#ee2a12"/>
  <g fill="#12309a"><circle cx="309.600" cy="698.300" r="4"/>
  <path d="M308.700 692.600h1.800l.4 2h-2.600zM308.700 704h1.800l.4-2h-2.600zM303.900 697.400v1.800l2 .4v-2.600zM315.300 697.400v1.800l-2 .4v-2.600zM304.900 694.900l1.300-1.300l1.700 1.100l-1.900 1.900zM314.300 694.900l-1.300-1.300l-1.700 1.100l1.900 1.900zM304.900 701.700l1.300 1.300l1.700-1.100l-1.900-1.900zM314.300 701.700l-1.300 1.300l-1.700-1.100l1.900-1.900z"/></g>
  <circle cx="309.600" cy="698.300" r="1.700" fill="#f4f4f4"/>
  <path d="M485.200 693.200L494.700 702.700M494.700 693.200L485.200 702.700" stroke="#5b5b57" stroke-width="3.300"/>
</svg>
<div class="abs" style="left:324.500px;top:689.500px;">F2-T14-ejemplo-ini : 1*</div>
<div class="abs" style="right:5px;top:721.500px;">162.53 x 96.91 mm</div>
</body>
</html>
